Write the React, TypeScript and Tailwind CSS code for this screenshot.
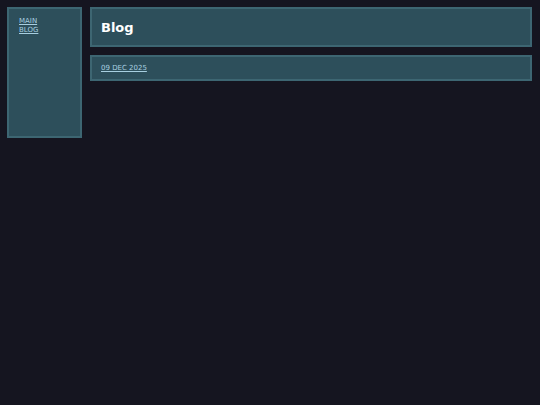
export default function App() {
  return (
    <div className="flex min-h-[405px] items-start gap-2 bg-[#151520] pt-[7px] pr-2 pl-[7px] font-['DejaVu_Sans',sans-serif]">
      <nav className="flex h-[131px] w-[75px] shrink-0 flex-col border-2 border-[#3d6672] bg-[#2d4f5b] px-[10px] pt-[8px] text-[7px] leading-[9px]">
        <a href="#" className="text-[#a8cfe0] underline">
          MAIN
        </a>
        <a href="#" className="text-[#a8cfe0] underline">
          BLOG
        </a>
      </nav>
      <main className="flex flex-1 flex-col gap-2">
        <header className="flex h-[40px] items-center border-2 border-[#3d6672] bg-[#2d4f5b] px-[9px] pt-[1px]">
          <h1 className="text-[13px] font-bold text-white">Blog</h1>
        </header>
        <div className="flex h-[26px] items-center border-2 border-[#3d6672] bg-[#2d4f5b] px-[9px]">
          <a href="#" className="text-[7px] text-[#a8cfe0] underline">
            09 DEC 2025
          </a>
        </div>
      </main>
    </div>
  );
}
